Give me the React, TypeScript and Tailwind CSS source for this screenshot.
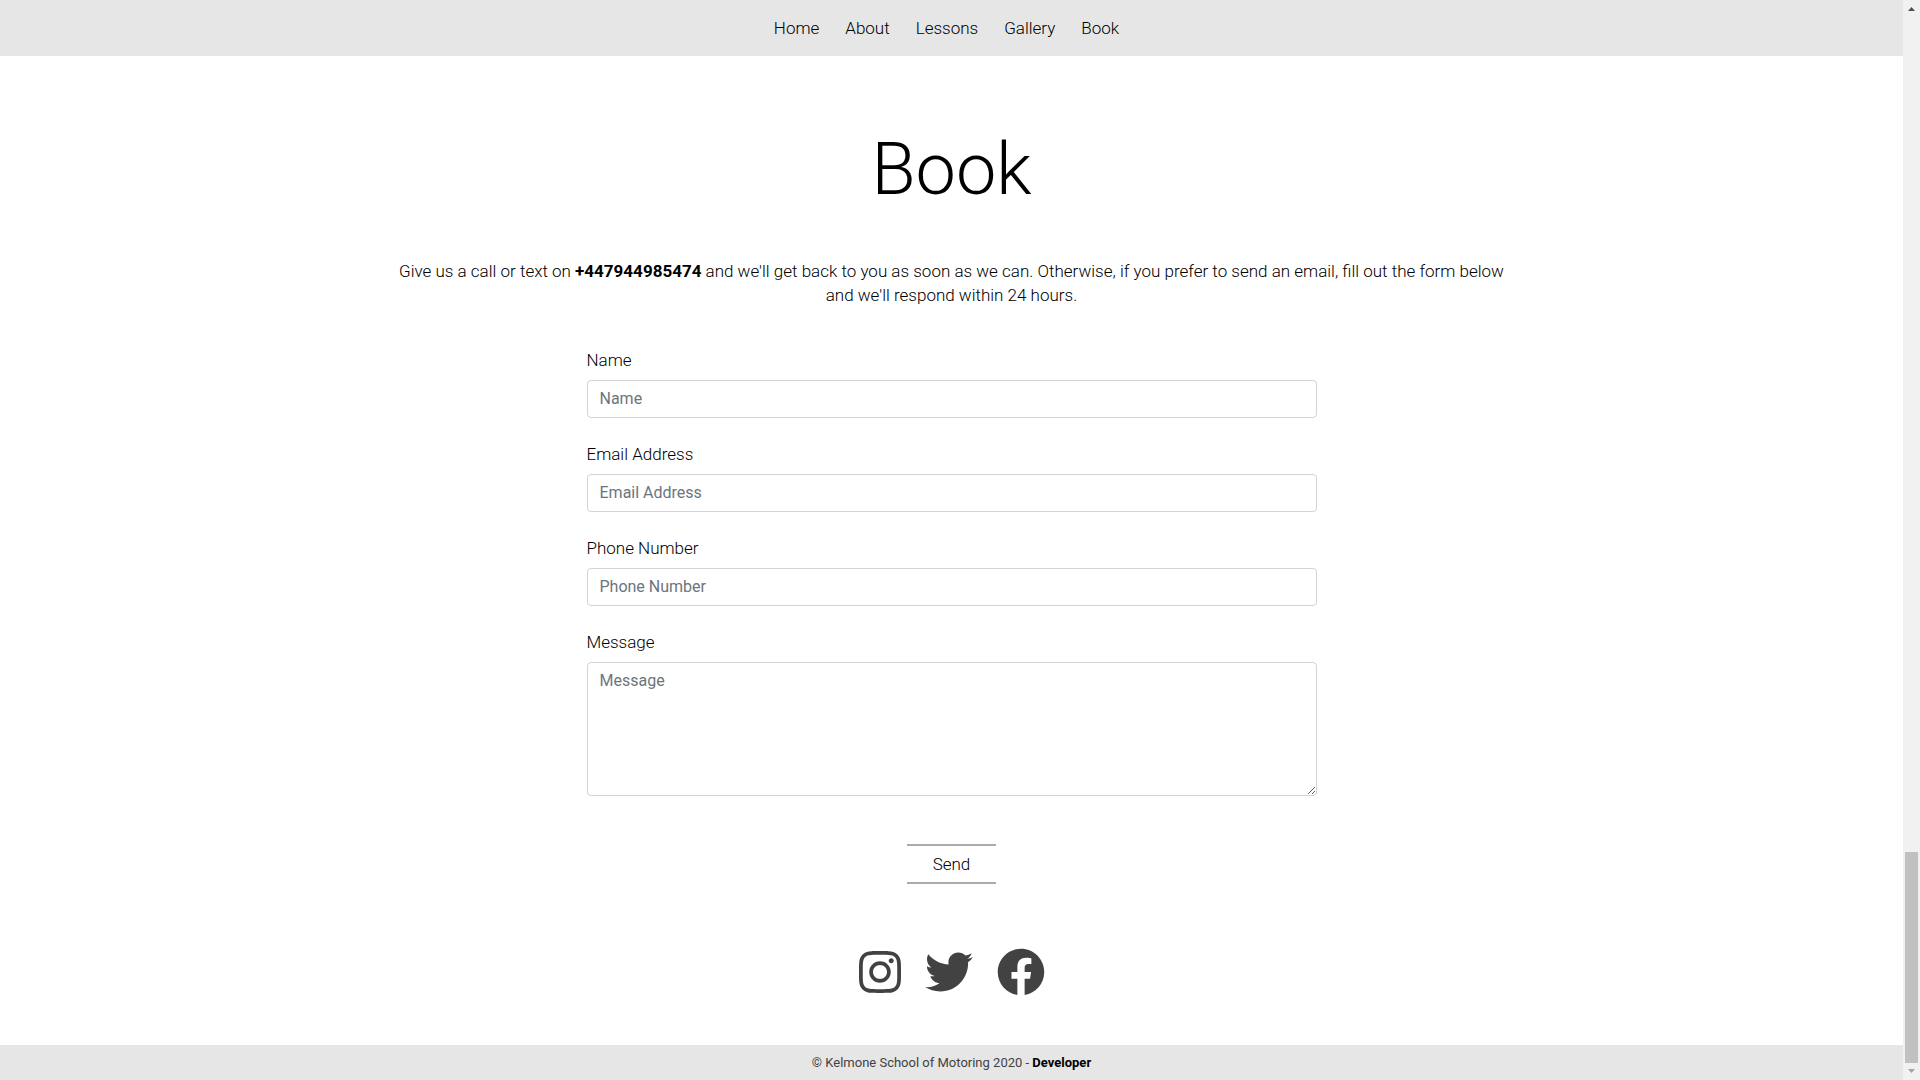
import { FaInstagram, FaTwitter, FaFacebook } from "react-icons/fa";

const nav = ["Home", "About", "Lessons", "Gallery", "Book"];
const fields = [
  { id: "name", label: "Name", type: "text" },
  { id: "email", label: "Email Address", type: "email" },
  { id: "phone", label: "Phone Number", type: "tel" },
];

const control =
  "block w-full rounded border border-[#ced4da] bg-white px-3 py-[6px] text-base leading-6 text-[#495057] placeholder:text-[#6c757d] placeholder:opacity-100";

function ScrollBar() {
  return (
    <div aria-hidden="true" className="flex w-[17px] shrink-0 flex-col items-center bg-[#f1f1f1]">
      <svg className="h-[17px] w-[17px]" viewBox="0 0 17 17" fill="#505050">
        <path d="M5 11h7L8.500 7z" />
      </svg>
      <div className="grow" />
      <div className="h-[211px] w-[13px] bg-[#c1c1c1]" />
      <svg className="h-[17px] w-[17px]" viewBox="0 0 17 17" fill="#a3a3a3">
        <path d="M5 6h7L8.500 10z" />
      </svg>
    </div>
  );
}

export default function App() {
  return (
    <div className="flex min-h-screen bg-white font-[Roboto,sans-serif] text-base leading-6 text-black">
      <div className="flex grow flex-col">
        <nav className="flex h-14 items-center justify-center gap-[26px] bg-[#e6e6e6] pr-[10px] text-[17px] leading-6 font-light">
          {nav.map((item) => (
            <a key={item} href={`#${item.toLowerCase()}`}>
              {item}
            </a>
          ))}
        </nav>

        <main id="book" className="mx-auto flex w-full max-w-[1140px] grow flex-col items-center px-[10px]">
          <h1 className="mt-[71px] text-[72px] leading-[86px] font-light">Book</h1>
          <p className="mt-[46px] text-center text-[17px] leading-6 font-light">
            Give us a call or text on{" "}
            <a href="tel:+447944985474" className="font-bold">
              +447944985474
            </a>{" "}
            and we'll get back to you as soon as we can. Otherwise, if you prefer to send an email, fill out the form
            below and we'll respond within 24 hours.
          </p>

          <form className="mt-[41px] flex w-full max-w-[730px] flex-col gap-6">
            {fields.map((f) => (
              <div key={f.id}>
                <label htmlFor={f.id} className="mb-2 block text-[17px] leading-6 font-light">
                  {f.label}
                </label>
                <input id={f.id} type={f.type} placeholder={f.label} className={control} />
              </div>
            ))}
            <div>
              <label htmlFor="message" className="mb-2 block text-[17px] leading-6 font-light">
                Message
              </label>
              <textarea id="message" rows={5} placeholder="Message" className={control} />
            </div>
            <button
              type="button"
              className="mt-6 self-center border-y-2 border-[#acacac] px-[26px] py-[6px] text-[17px] leading-6 font-light"
            >
              Send
            </button>
          </form>

          <div className="mt-16 flex items-center gap-6 text-[#424242]">
            <a href="#instagram" aria-label="Instagram">
              <FaInstagram className="h-12 w-[42px]" />
            </a>
            <a href="#twitter" aria-label="Twitter">
              <FaTwitter className="h-12 w-12" />
            </a>
            <a href="#facebook" aria-label="Facebook">
              <FaFacebook className="h-12 w-12" />
            </a>
          </div>
        </main>

        <footer className="bg-[#e6e6e6] py-[6px] text-center text-[13px] leading-[23px] text-[#424242]">
          © Kelmone School of Motoring 2020 -{" "}
          <a href="#developer" className="font-bold text-black">
            Developer
          </a>
        </footer>
      </div>
      <ScrollBar />
    </div>
  );
}
